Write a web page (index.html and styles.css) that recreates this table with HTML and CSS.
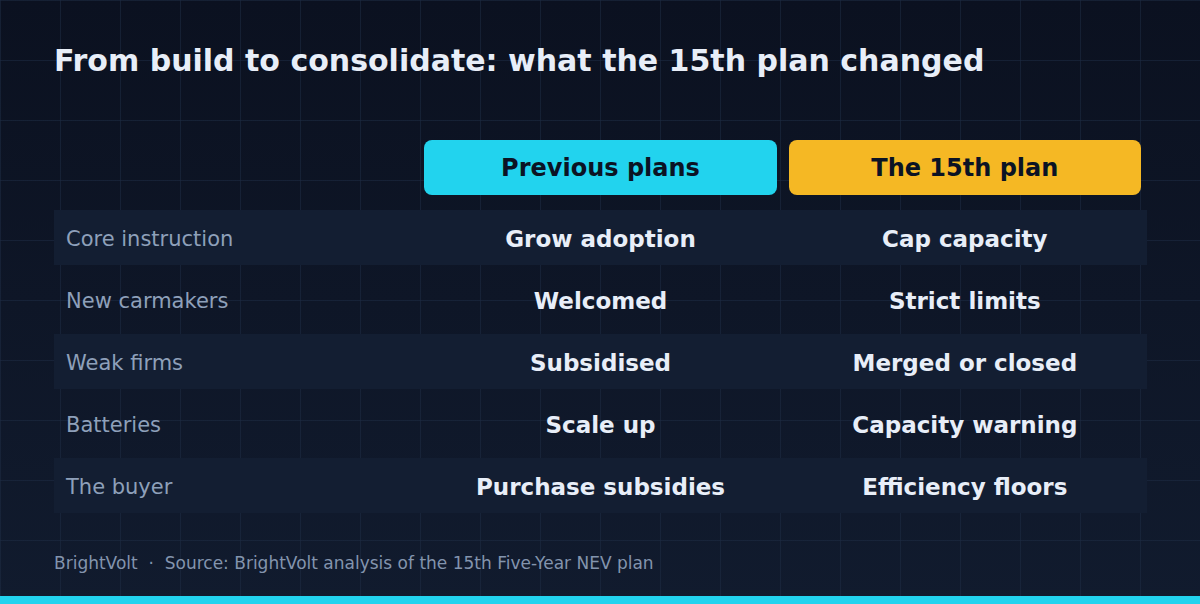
FILE: index.html
```html
<!DOCTYPE html>
<html lang="en">
<head>
<meta charset="utf-8">
<title>From build to consolidate</title>
<link rel="stylesheet" href="styles.css">
</head>
<body>
<main class="slide">
  <h1 class="title">From build to consolidate: what the 15th plan changed</h1>
  <section class="table">
    <div class="head">
      <div class="cell"></div>
      <div class="cell"><div class="pill pill-prev">Previous plans</div></div>
      <div class="cell"><div class="pill pill-new">The 15th plan</div></div>
    </div>
    <div class="rows">
      <div class="row shaded"><div class="label">Core instruction</div><div class="val">Grow adoption</div><div class="val">Cap capacity</div></div>
      <div class="row"><div class="label">New carmakers</div><div class="val">Welcomed</div><div class="val">Strict limits</div></div>
      <div class="row shaded"><div class="label">Weak firms</div><div class="val">Subsidised</div><div class="val">Merged or closed</div></div>
      <div class="row"><div class="label">Batteries</div><div class="val">Scale up</div><div class="val">Capacity warning</div></div>
      <div class="row shaded"><div class="label">The buyer</div><div class="val">Purchase subsidies</div><div class="val">Efficiency floors</div></div>
    </div>
  </section>
  <footer class="foot">BrightVolt&nbsp; · &nbsp;Source: BrightVolt analysis of the 15th Five-Year NEV plan</footer>
  <div class="bar"></div>
</main>
</body>
</html>
```

FILE: styles.css
```css
* { box-sizing: border-box; margin: 0; padding: 0; }
html, body { width: 1200px; height: 604px; overflow: hidden; }
body {
  font-family: "DejaVu Sans", Verdana, sans-serif;
  background: #0b1120;
}
.slide {
  position: relative;
  width: 1200px;
  height: 604px;
  display: flex;
  flex-direction: column;
  padding: 0 53px 0 54px;
  background-color: #0d1424;
  background-image:
    linear-gradient(to right, rgba(30, 44, 68, 0.55) 1px, transparent 1px),
    linear-gradient(to bottom, rgba(30, 44, 68, 0.55) 1px, transparent 1px),
    linear-gradient(180deg, #0b1120 0%, #111b2e 100%);
  background-size: 60px 60px, 60px 60px, 100% 100%;
}
.title {
  margin-top: 41px;
  font-size: 30px;
  line-height: 40px;
  font-weight: 700;
  color: #e8eef8;
  letter-spacing: 0;
}
.table {
  margin-top: 59px;
  display: flex;
  flex-direction: column;
}
.head {
  display: grid;
  grid-template-columns: 1fr 1fr 1fr;
  height: 55px;
}
.head .cell { padding: 0 6px; }
.pill {
  height: 55px;
  padding-top: 1px;
  border-radius: 8px;
  display: flex;
  align-items: center;
  justify-content: center;
  font-size: 24px;
  font-weight: 700;
  color: #0b1324;
}
.pill-prev { background: #22d3ee; }
.pill-new { background: #f5b824; }
.rows {
  margin-top: 15px;
  display: flex;
  flex-direction: column;
  gap: 7px;
}
.row {
  display: grid;
  grid-template-columns: 1fr 1fr 1fr;
  height: 55px;
  padding-top: 2px;
  align-items: center;
}
.row.shaded { background: #131e32; }
.label {
  padding-left: 12px;
  font-size: 21px;
  color: #8ea0ba;
}
.val {
  text-align: center;
  font-size: 23px;
  font-weight: 700;
  color: #e8eef8;
}
.foot {
  margin-top: 40px;
  font-size: 17px;
  color: #8394ad;
}
.bar {
  position: absolute;
  left: 0;
  right: 0;
  bottom: 0;
  height: 8px;
  background: #22d3ee;
}
```
